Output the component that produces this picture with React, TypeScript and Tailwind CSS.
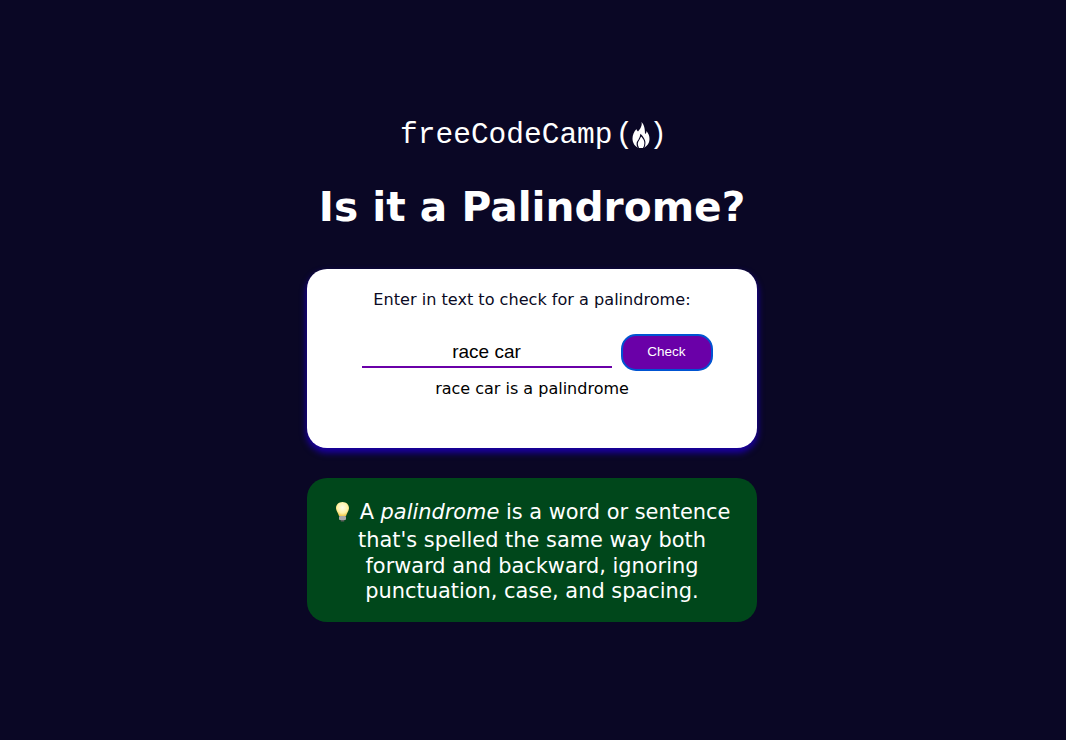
export default function App() {
  return (
    <main className="min-h-screen bg-[#0a0725] flex flex-col items-center pt-[118px] pr-[2px] font-['DejaVu_Sans',Verdana,sans-serif] text-white">
      <Logo />
      <h1 className="mt-[31px] text-[40.7px] leading-[48px] font-bold text-center">Is it a Palindrome?</h1>

      <div className="mt-[38px] w-[450px] h-[179px] bg-white rounded-[20px] flex flex-col items-center pt-[21px] shadow-[0_4px_6px_1px_#1a00a0]">
        <label className="text-[16.1px] leading-[20px] text-[#0a0a23]">Enter in text to check for a palindrome:</label>
        <div className="mt-[24px] ml-[10px] flex items-start gap-[9px]">
          <div className="mt-[2px] w-[250px] h-[32px] border-b-2 border-[#6a00a8] text-center text-black text-[19px] leading-[31px] font-['Liberation_Sans',Arial,sans-serif]">
            race car
          </div>
          <button className="w-[92px] h-[37px] rounded-[15px] border-2 border-[#0054d2] bg-[#6a00a8] text-white text-[13.5px] font-['Liberation_Sans',Arial,sans-serif]">
            Check
          </button>
        </div>
        <p className="mt-[8px] text-[16px] leading-[20px] text-black">race car is a palindrome</p>
      </div>

      <div className="mt-[30px] w-[450px] h-[144px] bg-[#00471b] rounded-[20px] pt-[22px] px-[20px] text-center text-[20.9px] leading-[25.5px]">
        <p>
          <span className="inline-block w-[17px] h-[28px] align-[-9px] mr-[9px]"><Bulb /></span>
          A <em>palindrome</em> is a word or sentence that's spelled the same way both forward and backward, ignoring punctuation, case, and spacing.
        </p>
      </div>
    </main>
  )
}

function Logo() {
  return (
    <div className="flex items-center h-[34px] ml-[3px] text-white font-['Liberation_Mono',monospace] text-[29.5px] leading-[34px]">
      <span>freeCodeCamp</span>
      <span className="ml-[3px]">(</span>
      <svg width="20" height="28" viewBox="0 0 20 28" className="mx-[-2px]">
        <path
          fill="#fff"
          d="M10.500 1C11.500 5 9 8 7 10.500 6 9.500 5.500 9 5.500 8 3 10.500 1.500 14 1.500 17.500 1.500 22 4 25.500 7.500 27H12.500C16 25.500 18.500 22 18.500 18 18.500 15 17.500 12.500 15.500 10 15.500 11.500 15 12.500 14 13 14 8.500 13.500 4 10.500 1z"
        />
        <path
          fill="none"
          stroke="#0a0725"
          strokeWidth="1.2"
          d="M7.500 27C5.500 24 6 21 8 18.500 9 17 9.500 16 9.800 14 11.500 15.500 12 17 12.800 18 14 20 14.500 24 12.500 27"
        />
      </svg>
      <span>)</span>
    </div>
  )
}

function Bulb() {
  return (
    <svg width="17" height="21" viewBox="0 0 17 21" className="block mt-[1px]">
      <defs>
        <radialGradient id="glow" cx="50%" cy="40%" r="60%">
          <stop offset="0%" stopColor="#fffde8" />
          <stop offset="65%" stopColor="#fff3a8" />
          <stop offset="100%" stopColor="#f2c94c" />
        </radialGradient>
      </defs>
      <path d="M8.500 1C4.500 1 2 3.800 2 7c0 3 2 4.500 3 8h7c1-3.500 3-5 3-8 0-3.200-2.500-6-6.500-6z" fill="url(#glow)" />
      <rect x="5" y="15" width="7" height="4" rx="1" fill="#a8a8a8" />
      <rect x="6.500" y="19" width="4" height="1.500" rx=".7" fill="#5f5f5f" />
    </svg>
  )
}
